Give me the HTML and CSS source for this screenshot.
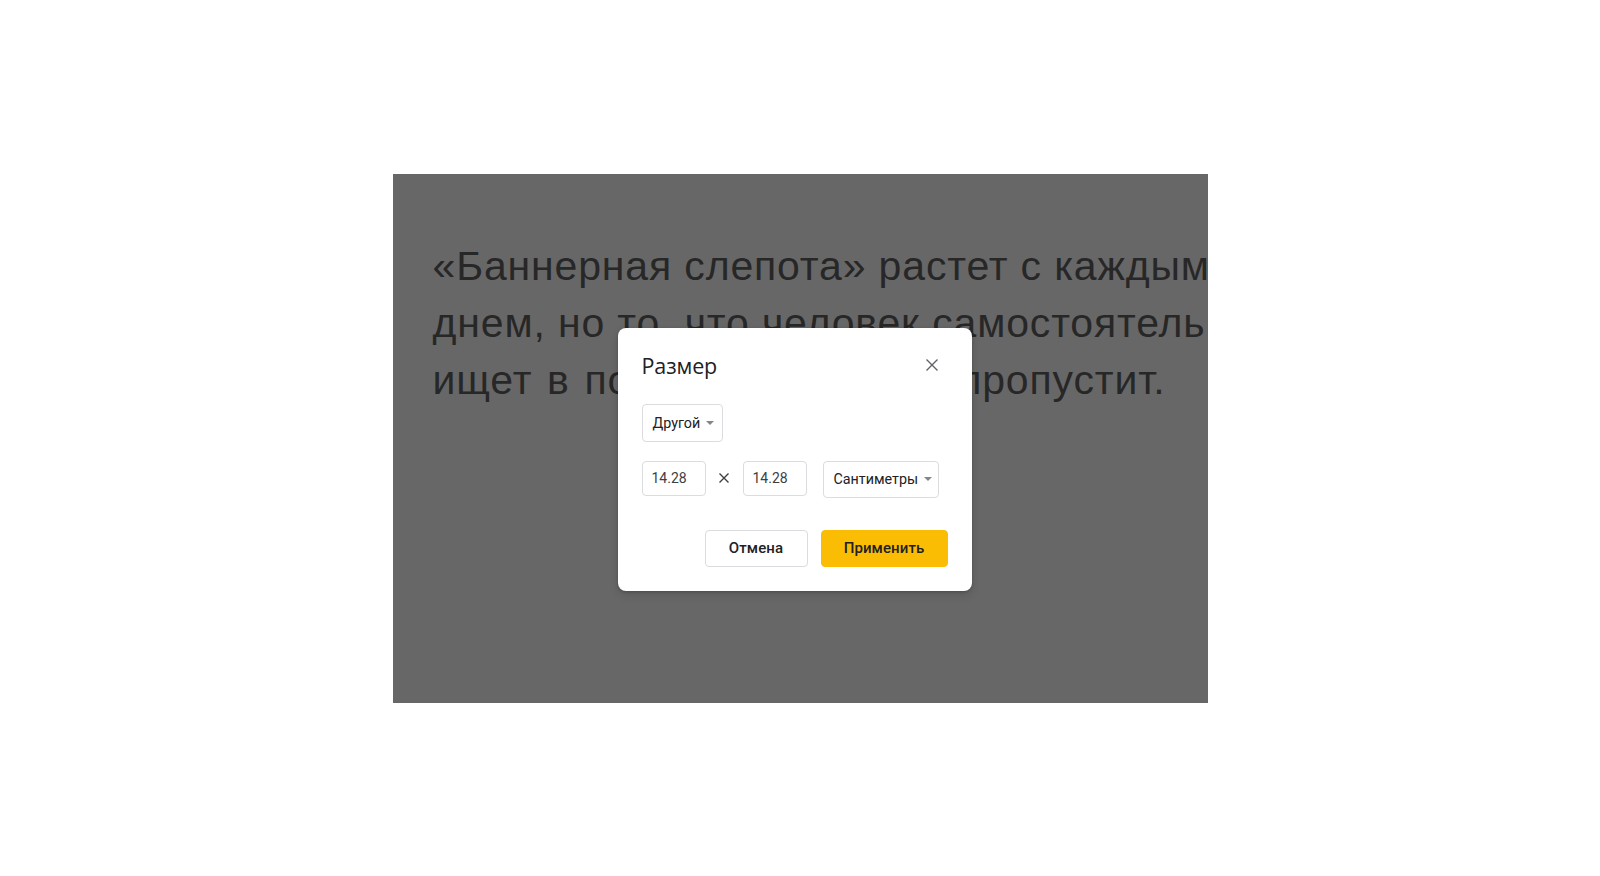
FILE: index.html
```html
<!DOCTYPE html>
<html lang="ru">
<head>
<meta charset="utf-8">
<title>Размер</title>
<link rel="stylesheet" href="styles.css">
</head>
<body>
<main class="stage">
  <section class="slide">
    <p class="slide-text">
      <span class="line">«Баннерная слепота» растет с каждым</span>
      <span class="line">днем, но то, что человек самостоятельно</span>
      <span class="line line-last">ищет в поисковике, он не пропустит.</span>
    </p>

    <div class="dialog" role="dialog" aria-label="Размер">
      <header class="dialog-header">
        <h2 class="dialog-title">Размер</h2>
        <button class="close-btn" aria-label="Закрыть">
          <svg viewBox="0 0 14 14" width="14" height="14"><path d="M1.5 1.5 L12.5 12.5 M12.5 1.5 L1.5 12.5" stroke="#5f6368" stroke-width="1.4" fill="none"/></svg>
        </button>
      </header>

      <div class="row preset-row">
        <div class="select select-preset">
          <span class="select-label">Другой</span>
          <span class="caret"></span>
        </div>
      </div>

      <div class="row size-row">
        <div class="field">14.28</div>
        <span class="times">
          <svg viewBox="0 0 12 12" width="12" height="12"><path d="M1.5 1.5 L10.5 10.5 M10.5 1.5 L1.5 10.5" stroke="#3c4043" stroke-width="1.4" fill="none"/></svg>
        </span>
        <div class="field">14.28</div>
        <div class="select select-unit">
          <span class="select-label">Сантиметры</span>
          <span class="caret"></span>
        </div>
      </div>

      <footer class="dialog-actions">
        <button class="btn btn-cancel">Отмена</button>
        <button class="btn btn-apply">Применить</button>
      </footer>
    </div>
  </section>
</main>
</body>
</html>
```

FILE: styles.css
```css
* { box-sizing: border-box; }

html, body {
  margin: 0;
  padding: 0;
  background: #ffffff;
}

.stage {
  width: 100%;
  height: 100vh;
  display: flex;
  align-items: center;
  justify-content: center;
}

.slide {
  position: relative;
  width: 815px;
  height: 529px;
  background: #676767;
  overflow: hidden;
}

.slide-text {
  margin: 0;
  padding: 64px 0 0 40px;
  font-family: "Liberation Sans", Arial, sans-serif;
  font-size: 41px;
  line-height: 57px;
  letter-spacing: 0.85px;
  color: #272727;
  white-space: nowrap;
}

.line { display: block; }

.line-last { word-spacing: 2.5px; }

.dialog {
  position: absolute;
  left: 225px;
  top: 154px;
  width: 354px;
  background: #ffffff;
  border-radius: 8px;
  box-shadow: 0 1px 3px rgba(0,0,0,0.2), 0 4px 10px rgba(0,0,0,0.12);
  padding: 24px 24px 24px 24px;
  display: flex;
  flex-direction: column;
  font-family: Roboto, "Liberation Sans", Arial, sans-serif;
  color: #202124;
}

.dialog-header {
  display: flex;
  align-items: center;
  justify-content: space-between;
  height: 28px;
}

.dialog-title {
  margin: 0;
  font-family: "Open Sans", Roboto, sans-serif;
  font-weight: 400;
  font-size: 21.5px;
  line-height: 28px;
  color: #202124;
  letter-spacing: -0.1px;
}

.close-btn {
  border: 0;
  background: none;
  padding: 0;
  width: 14px;
  height: 14px;
  margin-right: 9px;
  margin-top: -1px;
  display: flex;
  cursor: pointer;
}

.row { display: flex; }

.preset-row { margin-top: 24px; }

.size-row {
  margin-top: 19px;
  align-items: flex-start;
}

.select {
  display: flex;
  align-items: center;
  border: 1px solid #dadce0;
  border-radius: 4px;
  font-size: 14.3px;
  color: #202124;
}

.select-preset {
  width: 81px;
  height: 38px;
  padding: 0 0 0 10px;
}

.select-unit {
  width: 116px;
  height: 37px;
  padding: 0 0 0 10px;
  margin-left: 16px;
}

.select-label { flex: none; }

.caret {
  width: 0;
  height: 0;
  border-left: 4px solid transparent;
  border-right: 4px solid transparent;
  border-top: 4px solid #80868b;
  margin-left: 6px;
}

.field {
  width: 64px;
  height: 35px;
  border: 1px solid #dadce0;
  border-radius: 4px;
  padding: 0 0 0 9px;
  display: flex;
  align-items: center;
  font-size: 14px;
  color: #3c4043;
}

.times {
  width: 37px;
  height: 35px;
  display: flex;
  align-items: center;
  justify-content: center;
  padding-right: 1px;
}

.dialog-actions {
  display: flex;
  justify-content: flex-end;
  gap: 13px;
  margin-top: 32px;
}

.btn {
  height: 37px;
  border-radius: 4px;
  font-family: Roboto, "Liberation Sans", Arial, sans-serif;
  font-size: 15px;
  font-weight: 500;
  color: #202124;
  cursor: pointer;
  letter-spacing: 0.1px;
}

.btn-cancel {
  width: 103px;
  background: #ffffff;
  border: 1px solid #dadce0;
}

.btn-apply {
  width: 127px;
  background: #fbbc04;
  border: 1px solid #fbbc04;
}
```
